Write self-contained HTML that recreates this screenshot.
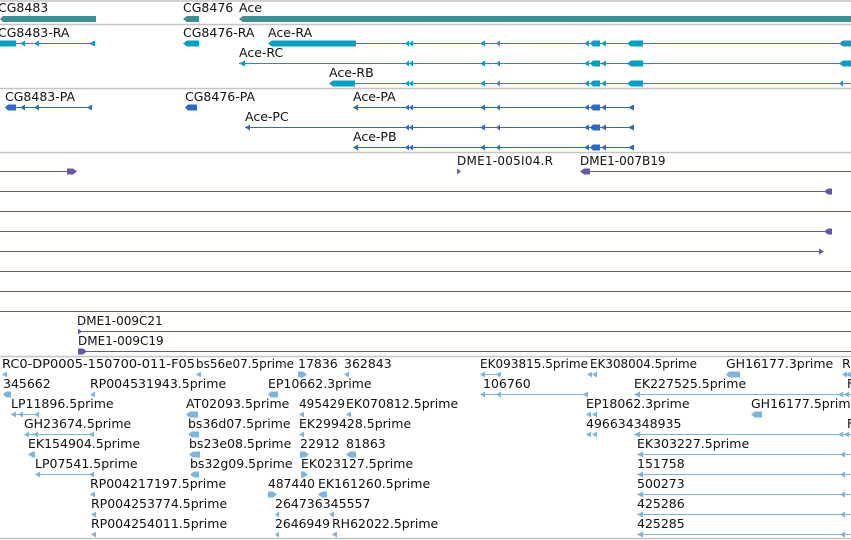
<!DOCTYPE html>
<html><head><meta charset="utf-8"><style>
html,body{margin:0;padding:0;background:#fff;width:851px;height:540px;overflow:hidden}
svg{display:block}
text{font-family:"DejaVu Sans","Liberation Sans",sans-serif;font-size:12.5px;fill:#111}
text.d{font-size:12px}
</style></head><body>
<svg width="851" height="540" viewBox="0 0 851 540" xmlns="http://www.w3.org/2000/svg">
<g stroke="#c4c4c4" stroke-width="1.5">
<line x1="0" y1="1" x2="851" y2="1"/><line x1="0" y1="24.5" x2="851" y2="24.5"/>
<line x1="0" y1="88.5" x2="851" y2="88.5"/><line x1="0" y1="152.5" x2="851" y2="152.5"/>
<line x1="0" y1="356.5" x2="851" y2="356.5"/><line x1="0" y1="538.5" x2="851" y2="538.5"/>
</g>
<text x="-2" y="12">CG8483</text><text x="183" y="12">CG8476</text><text x="239" y="12">Ace</text>
<g fill="#418f94">
<polygon points="0,19 3,16 96,16 96,22 3,22"/>
<polygon points="183,19 187,16 199,16 199,22 187,22"/>
<polygon points="239,19 243,16 851,16 851,22 243,22"/>
</g>
<text x="-2" y="37">CG8483-RA</text><text x="183" y="37">CG8476-RA</text><text x="268" y="37">Ace-RA</text>
<text x="239" y="57">Ace-RC</text><text x="329" y="77">Ace-RB</text>
<g stroke="#1a93b4" stroke-width="1">
<line x1="0" y1="43.5" x2="95" y2="43.5"/><line x1="356" y1="43.5" x2="851" y2="43.5"/>
<line x1="239" y1="63.5" x2="851" y2="63.5"/><line x1="355" y1="83.5" x2="851" y2="83.5"/>
</g>
<g fill="#079fc1" transform="translate(0,0.5)">
<rect x="0" y="40" width="16" height="6"/><polygon points="20,43 25,40 25,46"/><polygon points="34,43 39,40 39,46"/><polygon points="89,43 95,40 95,46"/>
<polygon points="183,43 187,40 199,40 199,46 187,46"/>
<polygon points="268,43 272,40 356,40 356,46 272,46"/>
<polygon points="239,63 245,60 245,66"/>
<polygon points="329,83 333,80 355,80 355,86 333,86"/>
<polygon points="839,43 843,40 851,40 851,46 843,46"/>
<polygon points="839,63 843,60 851,60 851,66 843,66"/>
<polygon points="839,83 843,80 843,86"/>
</g>
<g fill="#079fc1" id="ex" transform="translate(0,0.5)">
<polygon points="405,43 409,40 409,46"/><polygon points="409,43 413,40 413,46"/>
<polygon points="480,43 485,40 485,46"/><polygon points="496,43 500,40 500,46"/>
<polygon points="584,43 589,40 589,46"/><polygon points="590,43 593,40 600,40 600,46 593,46"/><polygon points="601,43 606,40 606,46"/>
<polygon points="627,43 631,40 643,40 643,46 631,46"/>
</g>
<use href="#ex" y="20"/><use href="#ex" y="40"/>
<text x="5" y="101">CG8483-PA</text><text x="185" y="101">CG8476-PA</text><text x="353" y="101">Ace-PA</text>
<text x="245" y="121">Ace-PC</text><text x="353" y="141">Ace-PB</text>
<g stroke="#3168c9" stroke-width="1">
<line x1="16" y1="107.5" x2="92" y2="107.5"/><line x1="353" y1="107.5" x2="634" y2="107.5"/>
<line x1="245" y1="127.5" x2="634" y2="127.5"/><line x1="353" y1="147.5" x2="634" y2="147.5"/>
</g>
<g fill="#3168c9" transform="translate(0,0.5)">
<polygon points="5,107 8,104 16,104 16,110 8,110"/><polygon points="20,107 25,104 25,110"/><polygon points="34,107 39,104 39,110"/><polygon points="87,107 92,104 92,110"/>
<polygon points="185,107 188,104 197,104 197,110 188,110"/>
<polygon points="353,107 358,104 358,110"/><polygon points="245,127 250,124 250,130"/><polygon points="353,147 358,144 358,150"/>
</g>
<g fill="#3168c9" id="px" transform="translate(0,0.5)">
<polygon points="405,107 409,104 409,110"/><polygon points="409,107 413,104 413,110"/>
<polygon points="480,107 485,104 485,110"/><polygon points="496,107 500,104 500,110"/>
<polygon points="584,107 589,104 589,110"/><polygon points="590,107 593,104 600,104 600,110 593,110"/><polygon points="601,107 606,104 606,110"/>
<polygon points="628,107 634,104 634,110"/>
</g>
<use href="#px" y="20"/><use href="#px" y="40"/>
<text class="d" x="457" y="165" textLength="96">DME1-005I04.R</text><text class="d" x="580" y="165">DME1-007B19</text>
<text class="d" x="77" y="325">DME1-009C21</text><text class="d" x="78" y="345">DME1-009C19</text>
<g stroke="#6a55a4" stroke-width="1">
<line x1="0" y1="171.5" x2="72" y2="171.5"/><line x1="582" y1="171.5" x2="851" y2="171.5"/>
<line x1="0" y1="191.5" x2="830" y2="191.5"/><line x1="0" y1="211.5" x2="851" y2="211.5"/>
<line x1="0" y1="231.5" x2="830" y2="231.5"/><line x1="0" y1="251.5" x2="822" y2="251.5"/>
<line x1="0" y1="271.5" x2="851" y2="271.5"/><line x1="0" y1="291.5" x2="851" y2="291.5"/>
<line x1="0" y1="311.5" x2="851" y2="311.5"/><line x1="78" y1="331.5" x2="851" y2="331.5"/>
<line x1="78" y1="351.5" x2="851" y2="351.5"/>
</g>
<g fill="#6a55a4">
<polygon points="67,168.5 73,168.5 77,171.5 73,174.5 67,174.5"/>
<polygon points="457,168.5 461,171.5 457,174.5"/>
<polygon points="580,171.5 584,168.5 590,168.5 590,174.5 584,174.5"/>
<polygon points="824,191.5 828,188.5 832,188.5 832,194.5 828,194.5"/>
<polygon points="824,231.5 828,228.5 832,228.5 832,234.5 828,234.5"/>
<polygon points="819,248.5 824,251.5 819,254.5"/>
<polygon points="78,328.5 82,331.5 78,334.5"/>
<polygon points="78,348.5 83,348.5 87,351.5 83,354.5 78,354.5"/>
</g>
<g>
<text x="2" y="368" textLength="193" lengthAdjust="spacingAndGlyphs">RC0-DP0005-150700-011-F05</text><text x="196" y="368" textLength="98" lengthAdjust="spacingAndGlyphs">bs56e07.5prime</text><text x="298" y="368">17836</text><text x="344" y="368">362843</text><text x="480" y="368" textLength="108" lengthAdjust="spacingAndGlyphs">EK093815.5prime</text><text x="590" y="368" textLength="107" lengthAdjust="spacingAndGlyphs">EK308004.5prime</text><text x="726" y="368">GH16177.3prime</text><text x="842" y="368">R</text>
<text x="3" y="388">345662</text><text x="90" y="388">RP004531943.5prime</text><text x="268" y="388">EP10662.3prime</text><text x="483" y="388">106760</text><text x="634" y="388">EK227525.5prime</text><text x="847" y="388">F</text>
<text x="11" y="408">LP11896.5prime</text><text x="186" y="408">AT02093.5prime</text><text x="299" y="408" textLength="46" lengthAdjust="spacingAndGlyphs">495429</text><text x="346" y="408">EK070812.5prime</text><text x="586" y="408">EP18062.3prime</text><text x="751" y="408">GH16177.5prime</text>
<text x="24" y="428">GH23674.5prime</text><text x="188" y="428">bs36d07.5prime</text><text x="299" y="428">EK299428.5prime</text><text x="586" y="428">496634348935</text><text x="847" y="428">F</text>
<text x="28" y="448">EK154904.5prime</text><text x="189" y="448">bs23e08.5prime</text><text x="300" y="448">22912</text><text x="346" y="448">81863</text><text x="637" y="448">EK303227.5prime</text>
<text x="35" y="468">LP07541.5prime</text><text x="190" y="468">bs32g09.5prime</text><text x="301" y="468">EK023127.5prime</text><text x="637" y="468">151758</text>
<text x="90" y="488">RP004217197.5prime</text><text x="268" y="488" textLength="47" lengthAdjust="spacingAndGlyphs">487440</text><text x="318" y="488">EK161260.5prime</text><text x="637" y="488">500273</text>
<text x="91" y="508">RP004253774.5prime</text><text x="275" y="508">264736345557</text><text x="637" y="508">425286</text>
<text x="91" y="528">RP004254011.5prime</text><text x="275" y="528" textLength="55" lengthAdjust="spacingAndGlyphs">2646949</text><text x="332" y="528">RH62022.5prime</text><text x="637" y="528">425285</text>
</g>
<g stroke="#7db5dd" stroke-width="1">
<line x1="482" y1="374.5" x2="497" y2="374.5"/>
<line x1="482" y1="394.5" x2="588" y2="394.5"/><line x1="634" y1="394.5" x2="851" y2="394.5"/>
<line x1="11" y1="414.5" x2="39" y2="414.5"/>
<line x1="24" y1="434.5" x2="94" y2="434.5"/><line x1="634" y1="434.5" x2="851" y2="434.5"/>
<line x1="637" y1="454.5" x2="851" y2="454.5"/>
<line x1="35" y1="474.5" x2="94" y2="474.5"/><line x1="637" y1="474.5" x2="851" y2="474.5"/>
<line x1="637" y1="494.5" x2="851" y2="494.5"/><line x1="637" y1="514.5" x2="851" y2="514.5"/><line x1="637" y1="534.5" x2="851" y2="534.5"/>
</g>
<g fill="#7db5dd">
<polygon points="2,374.5 7,371.5 7,377.5"/><polygon points="196,374.5 201,371.5 201,377.5"/>
<polygon points="298,371.5 303,371.5 307,374.5 303,377.5 298,377.5"/><polygon points="344,374.5 349,371.5 349,377.5"/>
<polygon points="480,374.5 485,371.5 485,377.5"/><polygon points="496,374.5 501,371.5 501,377.5"/>
<polygon points="587,374.5 592,371.5 592,377.5"/><polygon points="592,374.5 597,371.5 597,377.5"/>
<polygon points="726,374.5 729,371.5 740,371.5 740,377.5 729,377.5"/><polygon points="842,374.5 847,371.5 847,377.5"/><polygon points="846,374.5 851,371.5 851,377.5"/>
<polygon points="3,394.5 6,391.5 11,391.5 11,397.5 6,397.5"/><polygon points="90,394.5 95,391.5 95,397.5"/>
<polygon points="268,394.5 271,391.5 278,391.5 278,397.5 271,397.5"/>
<polygon points="480,394.5 485,391.5 485,397.5"/><polygon points="496,394.5 501,391.5 501,397.5"/><polygon points="583,394.5 588,391.5 588,397.5"/>
<polygon points="634,394.5 640,391.5 640,397.5"/><polygon points="838,394.5 843,391.5 843,397.5"/><polygon points="844,394.5 849,391.5 849,397.5"/>
<polygon points="11,414.5 16,411.5 16,417.5"/><polygon points="18,414.5 23,411.5 23,417.5"/><polygon points="34,414.5 39,411.5 39,417.5"/>
<polygon points="186,414.5 190,411.5 198,411.5 198,417.5 190,417.5"/><polygon points="299,414.5 304,411.5 304,417.5"/><polygon points="346,414.5 351,411.5 351,417.5"/>
<polygon points="586,414.5 591,411.5 591,417.5"/><polygon points="592,414.5 597,411.5 597,417.5"/>
<polygon points="751,414.5 755,411.5 762,411.5 762,417.5 755,417.5"/>
<polygon points="24,434.5 29,431.5 29,437.5"/><polygon points="33,434.5 38,431.5 38,437.5"/><polygon points="89,434.5 94,431.5 94,437.5"/>
<polygon points="188,434.5 192,431.5 199,431.5 199,437.5 192,437.5"/><polygon points="299,434.5 304,431.5 304,437.5"/>
<polygon points="586,434.5 591,431.5 591,437.5"/><polygon points="592,434.5 597,431.5 597,437.5"/>
<polygon points="634,434.5 640,431.5 640,437.5"/><polygon points="838,434.5 843,431.5 843,437.5"/><polygon points="844,434.5 849,431.5 849,437.5"/>
<polygon points="28,454.5 33,451.5 35,451.5 35,457.5 33,457.5"/><polygon points="189,454.5 193,451.5 200,451.5 200,457.5 193,457.5"/>
<polygon points="300,451.5 305,451.5 309,454.5 305,457.5 300,457.5"/><polygon points="346,454.5 350,451.5 356,451.5 356,457.5 350,457.5"/>
<polygon points="637,454.5 643,451.5 643,457.5"/><polygon points="840,454.5 845,451.5 845,457.5"/>
<polygon points="35,474.5 40,471.5 40,477.5"/><polygon points="89,474.5 94,471.5 94,477.5"/>
<polygon points="190,474.5 194,471.5 199,471.5 199,477.5 194,477.5"/><polygon points="301,471.5 304,471.5 308,474.5 304,477.5 301,477.5"/>
<polygon points="637,474.5 643,471.5 643,477.5"/><polygon points="840,474.5 845,471.5 845,477.5"/>
<polygon points="90,494.5 95,491.5 95,497.5"/><polygon points="268,491.5 273,491.5 277,494.5 273,497.5 268,497.5"/>
<polygon points="318,494.5 322,491.5 327,491.5 327,497.5 322,497.5"/>
<polygon points="637,494.5 643,491.5 643,497.5"/><polygon points="840,494.5 845,491.5 845,497.5"/>
<polygon points="91,514.5 96,511.5 96,517.5"/><polygon points="275,514.5 279,511.5 279,517.5"/><polygon points="329,514.5 334,511.5 334,517.5"/>
<polygon points="637,514.5 643,511.5 643,517.5"/><polygon points="840,514.5 845,511.5 845,517.5"/>
<polygon points="91,534.5 96,531.5 96,537.5"/><polygon points="275,534.5 279,531.5 279,537.5"/><polygon points="332,534.5 337,531.5 337,537.5"/>
<polygon points="637,534.5 643,531.5 643,537.5"/><polygon points="840,534.5 845,531.5 845,537.5"/>
</g>
</svg>
</body></html>
